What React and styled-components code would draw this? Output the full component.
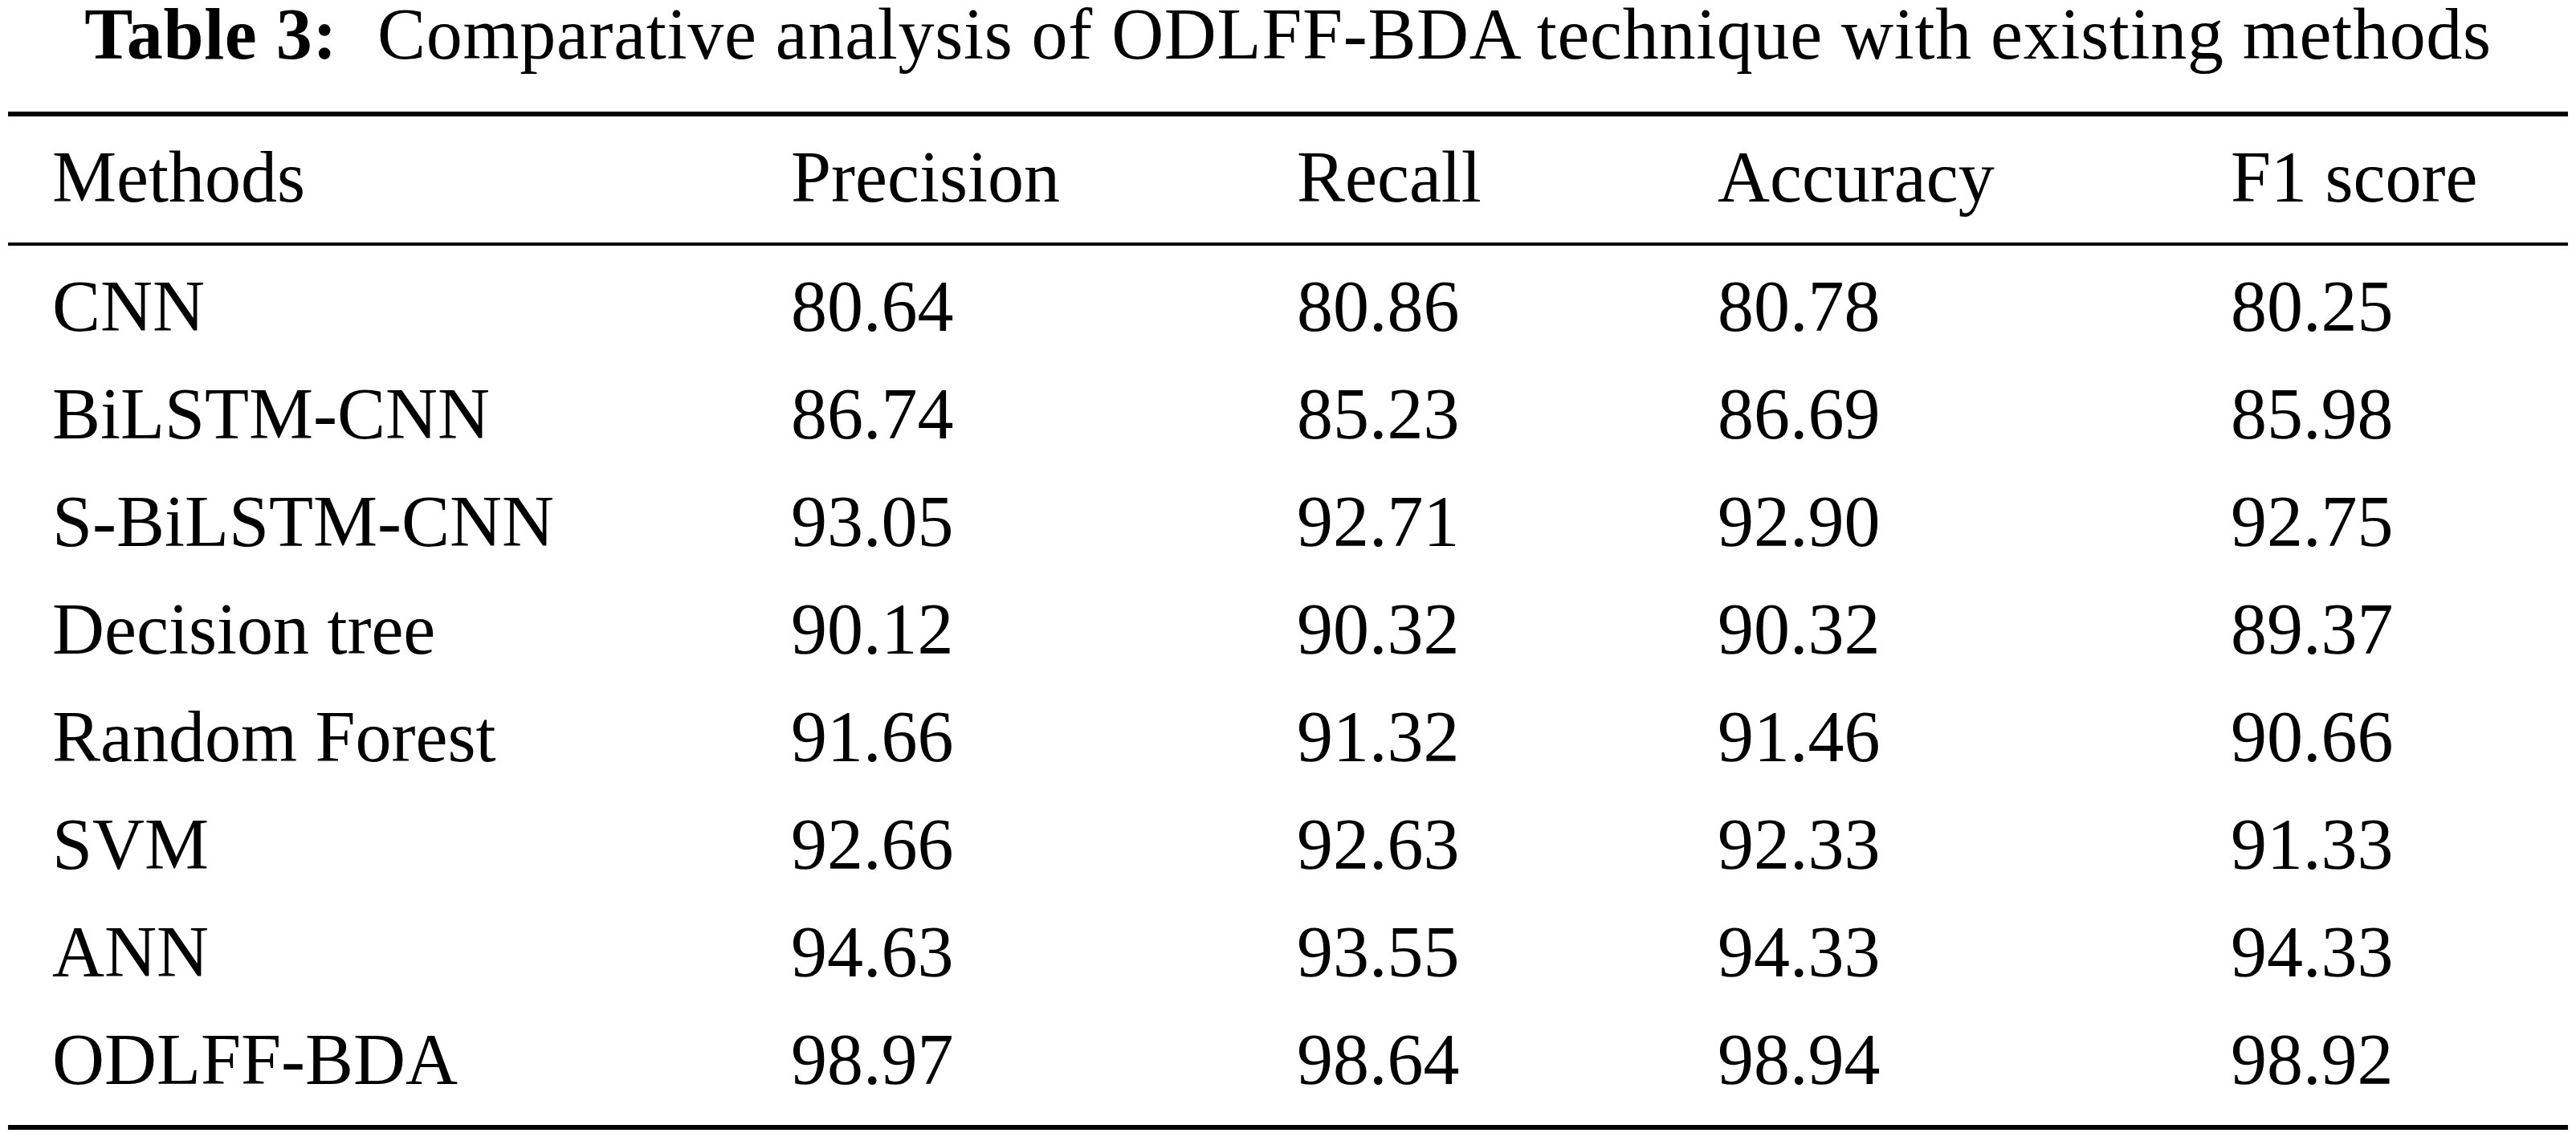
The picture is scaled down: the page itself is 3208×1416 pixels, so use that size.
import React from "react";
import styled, { createGlobalStyle } from "styled-components";

const GlobalStyle = createGlobalStyle`
  html, body {
    margin: 0;
    padding: 0;
    background: #ffffff;
  }
  body {
    font-family: "Liberation Serif", "Times New Roman", serif;
    color: #000000;
  }
`;

const Page = styled.div`
  display: flex;
  flex-direction: column;
  align-items: center;
  width: 3208px;
  padding: 0 10px;
  box-sizing: border-box;
`;

const Caption = styled.div`
  font-size: 90px;
  line-height: 86px;
  height: 86px;
  letter-spacing: 0.7px;
  white-space: nowrap;
  margin-bottom: 53px;
`;

const CaptionLabel = styled.span`
  font-weight: bold;
  margin-right: 50px;
`;

const Table = styled.div`
  width: 100%;
  border-top: 6px solid #000;
  border-bottom: 6px solid #000;
  font-size: 90px;
`;

const Row = styled.div`
  display: grid;
  grid-template-columns: 920px 630px 524px 639px 1fr;
  padding-left: 55px;
  line-height: ${(p) => (p.$head ? "151px" : "134px")};
  white-space: nowrap;
`;

const Head = styled.div`
  padding-bottom: 6px;
  border-bottom: 4px solid #000;
`;

const Body = styled.div`
  padding-top: 9px;
  padding-bottom: 14px;
`;

const Cell = styled.div``;

const columns = ["Methods", "Precision", "Recall", "Accuracy", "F1 score"];

const rows = [
  ["CNN", "80.64", "80.86", "80.78", "80.25"],
  ["BiLSTM-CNN", "86.74", "85.23", "86.69", "85.98"],
  ["S-BiLSTM-CNN", "93.05", "92.71", "92.90", "92.75"],
  ["Decision tree", "90.12", "90.32", "90.32", "89.37"],
  ["Random Forest", "91.66", "91.32", "91.46", "90.66"],
  ["SVM", "92.66", "92.63", "92.33", "91.33"],
  ["ANN", "94.63", "93.55", "94.33", "94.33"],
  ["ODLFF-BDA", "98.97", "98.64", "98.94", "98.92"],
];

const App = () => {
  return (
    <Page>
      <GlobalStyle />
      <Caption>
        <CaptionLabel>Table 3:</CaptionLabel>
        Comparative analysis of ODLFF-BDA technique with existing methods
      </Caption>
      <Table>
        <Head>
          <Row $head>
            {columns.map((c) => (
              <Cell key={c}>{c}</Cell>
            ))}
          </Row>
        </Head>
        <Body>
          {rows.map((r) => (
            <Row key={r[0]}>
              {r.map((v, i) => (
                <Cell key={i}>{v}</Cell>
              ))}
            </Row>
          ))}
        </Body>
      </Table>
    </Page>
  );
};

export default App;
